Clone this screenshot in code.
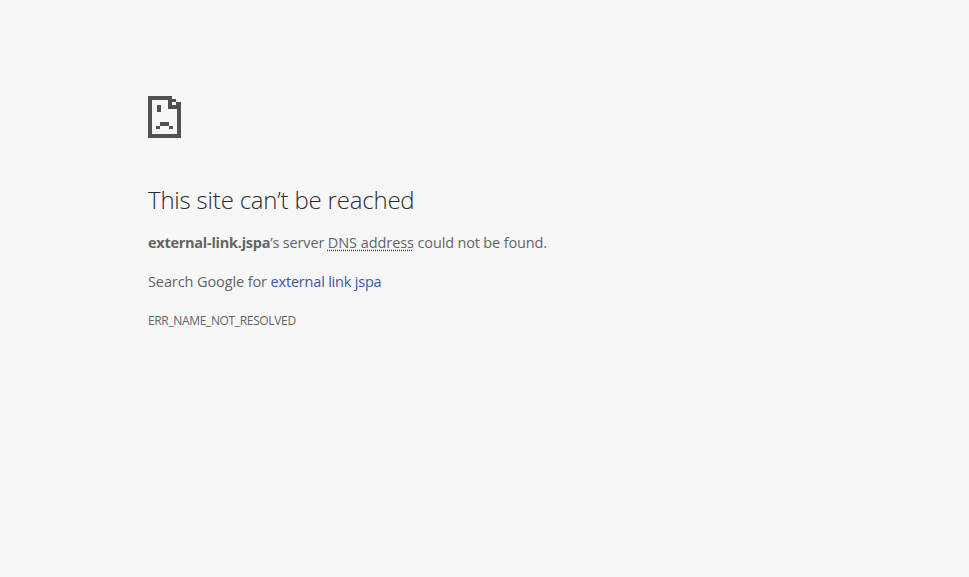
import React from "react";

function SadPage() {
  return (
    <svg width="33" height="42" viewBox="0 0 33 42" shapeRendering="crispEdges" className="block">
      <path
        fill="#525252"
        fillRule="evenodd"
        d="M0 0h24v3h4v3h5v36H0zM4 4v34h25V13H20V4zM24 6v3h4V6z"
      />
      <path fill="#525252" d="M9 9h4v7H9zM12 26h9v4h-9zM8 30h4v3H8zM21 30h4v3h-4z" />
    </svg>
  );
}

export default function App() {
  return (
    <div className="min-h-screen bg-[#f7f7f7] pl-[148px] pt-[96px] font-['Open_Sans','Noto_Sans',sans-serif] text-[15px] text-[#646464]">
      <SadPage />
      <h1 className="mt-[47px] text-[24px] leading-[30px] tracking-[-0.2px] font-[350] text-[#2c2c2c]">
        This site can’t be reached
      </h1>
      <p className="mt-[18px] text-[14.5px] leading-[20px] tracking-[-0.16px]">
        <strong className="font-bold tracking-[-0.26px]">external-link.jspa</strong>’s server{" "}
        <span className="underline decoration-dotted decoration-[#444444] underline-offset-2 tracking-[-0.06px]">DNS address</span> could
        not be found.
      </p>
      <p className="mt-[19px] text-[14.5px] leading-[20px] tracking-[-0.1px]">
        Search Google for <a className="text-[#3b55ad] tracking-[-0.2px]">external link jspa</a>
      </p>
      <div className="mt-[21px] text-[12px] leading-[16px] tracking-[-0.35px] uppercase">ERR_NAME_NOT_RESOLVED</div>
    </div>
  );
}
